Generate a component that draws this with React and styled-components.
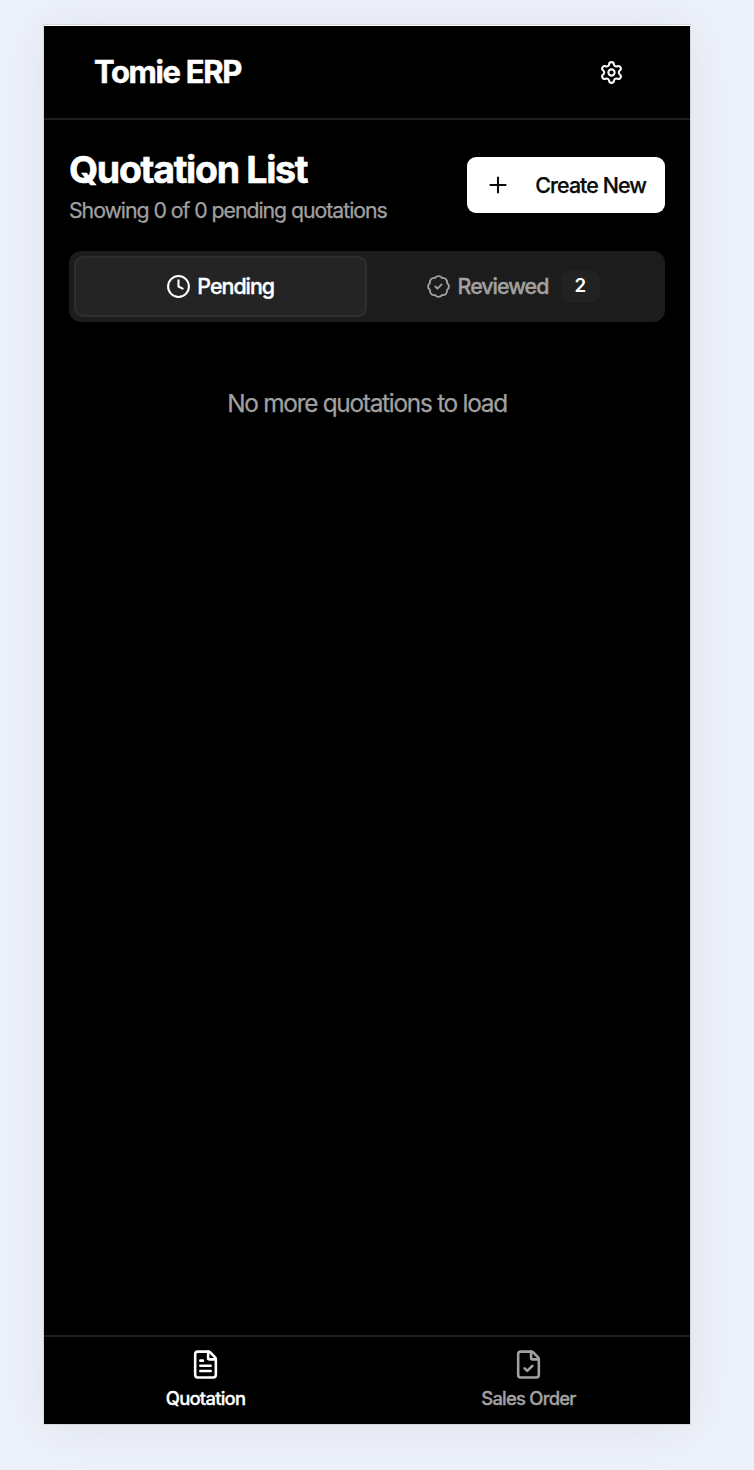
import React from "react";
import styled, { createGlobalStyle } from "styled-components";
import { BadgeCheck, Clock, FileCheck, FileText, Plus, Settings } from "lucide-react";

const GlobalStyle = createGlobalStyle`
  *, *::before, *::after { box-sizing: border-box; }
  body {
    margin: 0;
    background: #edf1fa;
    font-family: Inter, "Liberation Sans", sans-serif;
    -webkit-font-smoothing: antialiased;
    -webkit-text-stroke: 0.25px currentColor;
  }
  h1, h2, p { margin: 0; }
  button { font: inherit; border: 0; background: none; padding: 0; margin: 0; }
`;

const Page = styled.div`
  height: 1470px;
  padding: 25px 64px 46px 44px;
  overflow: hidden;
`;

const Screen = styled.main`
  display: flex;
  flex-direction: column;
  height: 1399px;
  background: #000;
  color: #fafafa;
  border-top: 1px solid #fff;
  box-shadow: 0 0 0 1px rgba(70, 50, 50, 0.1), 0 3px 50px rgba(60, 50, 30, 0.08);
`;

const Header = styled.header`
  display: flex;
  align-items: center;
  justify-content: space-between;
  height: 94px;
  padding: 0 66px 0 50px;
  border-bottom: 2px solid #1d1d1d;
`;

const Brand = styled.h1`
  font-size: 31px;
  line-height: 40px;
  font-weight: 720;
  letter-spacing: -1.35px;
  color: #fff;
  -webkit-text-stroke-width: 0.5px;
`;

const IconButton = styled.button`
  display: flex;
  color: #fafafa;
`;

const Content = styled.section`
  flex: 1;
  padding: 26px 25px 0;
`;

const TitleRow = styled.div`
  display: flex;
  align-items: center;
  justify-content: space-between;
  height: 78px;
`;

const Title = styled.h2`
  padding-top: 2px;
  font-size: 37.5px;
  line-height: 46px;
  font-weight: 720;
  letter-spacing: -1.3px;
  color: #fff;
  -webkit-text-stroke-width: 0.6px;
`;

const Subtitle = styled.p`
  padding-top: 1px;
  margin-bottom: -1px;
  font-size: 21.3px;
  line-height: 32px;
  letter-spacing: -1.05px;
  color: #a1a1a1;
`;

const CreateButton = styled.button`
  display: flex;
  align-items: center;
  justify-content: space-between;
  width: 198px;
  height: 56px;
  padding: 0 19px 0 18px;
  border-radius: 9px;
  background: #fff;
  color: #0a0a0a;
  font-size: 21.4px;
  font-weight: 530;
  letter-spacing: -0.93px;
  white-space: nowrap;
`;

const Tabs = styled.div`
  display: flex;
  height: 71.5px;
  margin-top: 26.5px;
  padding: 5px;
  border-radius: 12px;
  background: #1c1c1c;
`;

const Tab = styled.button`
  flex: 1;
  display: flex;
  align-items: center;
  justify-content: center;
  gap: 6.5px;
  padding: 0 1px 0 0;
  border-radius: 9px;
  border: 2px solid ${({ $active }) => ($active ? "#2e2e2e" : "transparent")};
  background: ${({ $active }) => ($active ? "#242424" : "transparent")};
  color: ${({ $active }) => ($active ? "#fff" : "#a1a1a1")};
  font-size: 21.4px;
  line-height: 26px;
  font-weight: 550;
  letter-spacing: -1px;
  -webkit-text-stroke-width: 0.35px;
`;

const TabLabel = styled.span`
  padding-bottom: 1px;
`;

const Count = styled.span`
  display: grid;
  place-items: center;
  width: 39px;
  height: 33px;
  margin-left: 6px;
  border-radius: 9px;
  background: #222;
  color: #fff;
  font-size: 18.7px;
  font-weight: 600;
  letter-spacing: 0;
  -webkit-text-stroke-width: 0;
`;

const EmptyMessage = styled.p`
  margin-top: 63px;
  font-size: 24.4px;
  line-height: 36px;
  letter-spacing: -1.27px;
  text-align: center;
  color: #a1a1a1;
`;

const BottomNav = styled.nav`
  display: flex;
  height: 89px;
  border-top: 2px solid #1d1d1d;
`;

const NavItem = styled.button`
  flex: 1;
  display: flex;
  flex-direction: column;
  align-items: center;
  padding-top: 12px;
  gap: 6px;
  color: ${({ $active }) => ($active ? "#fff" : "#a1a1a1")};
  font-size: 18.4px;
  line-height: 25px;
  font-weight: 550;
  letter-spacing: -0.75px;
  -webkit-text-stroke-width: 0.35px;
`;

export default function App() {
  return (
    <>
      <GlobalStyle />
      <Page>
        <Screen>
          <Header>
            <Brand>Tomie ERP</Brand>
            <IconButton aria-label="Settings"><Settings size={25} /></IconButton>
          </Header>
          <Content>
            <TitleRow>
              <div>
                <Title>Quotation List</Title>
                <Subtitle>Showing 0 of 0 pending quotations</Subtitle>
              </div>
              <CreateButton>
                <Plus size={26} strokeWidth={1.9} />
                Create New
              </CreateButton>
            </TitleRow>
            <Tabs>
              <Tab $active>
                <Clock size={25} />
                <TabLabel>Pending</TabLabel>
              </Tab>
              <Tab>
                <BadgeCheck size={25} strokeWidth={1.8} />
                <TabLabel>Reviewed</TabLabel>
                <Count>2</Count>
              </Tab>
            </Tabs>
            <EmptyMessage>No more quotations to load</EmptyMessage>
          </Content>
          <BottomNav>
            <NavItem $active>
              <FileText size={31} />
              Quotation
            </NavItem>
            <NavItem>
              <FileCheck size={31} />
              Sales Order
            </NavItem>
          </BottomNav>
        </Screen>
      </Page>
    </>
  );
}
